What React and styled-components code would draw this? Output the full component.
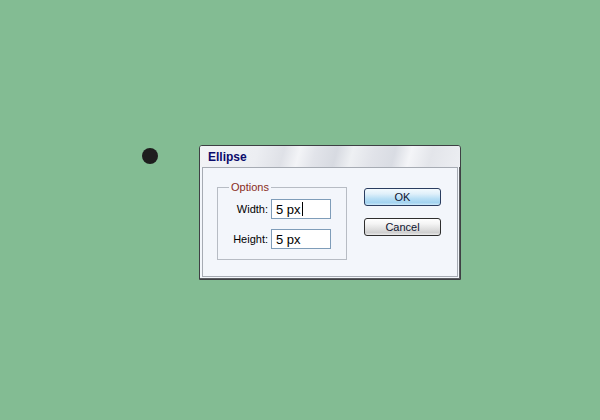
import React from 'react';
import styled, { createGlobalStyle } from 'styled-components';

const GlobalStyle = createGlobalStyle`
  html, body {
    margin: 0;
    padding: 0;
    background: #83bc93;
    width: 600px;
    height: 420px;
    overflow: hidden;
    font-family: "Liberation Sans", Arial, sans-serif;
  }
`;

const Stage = styled.div`
  display: flex;
  align-items: flex-start;
  padding: 145px 0 0 142px;
`;

const Dot = styled.div`
  width: 16px;
  height: 16px;
  border-radius: 50%;
  background: #1e1e1e;
  margin: 3px 41px 0 0;
`;

const Window = styled.div`
  width: 260px;
  border: 1px solid #3e4044;
  border-radius: 3px 3px 0 0;
  background: #f3f6fb;
  box-shadow: inset -1px -1px 0 #5c5e62;
  display: flex;
  flex-direction: column;
`;

const TitleBar = styled.div`
  height: 21px;
  display: flex;
  align-items: center;
  padding: 0 0 0 8px;
  border-radius: 2px 2px 0 0;
  background: linear-gradient(
    105deg,
    #f2f3f6 0%,
    #eceef2 22%,
    #dfe1e7 32%,
    #f3f4f7 38%,
    #e2e4ea 44%,
    #d7dae1 52%,
    #eef0f3 58%,
    #e1e3e9 66%,
    #d9dce3 74%,
    #f4f5f8 80%,
    #e3e5ea 88%,
    #eceef2 100%
  );
`;

const Title = styled.span`
  font-size: 12px;
  font-weight: bold;
  color: #0b0b6b;
  padding-top: 1px;
`;

const Body = styled.div`
  margin: 0 2px 2px 2px;
  border: 1px solid #a6abb3;
  background: #f3f6fb;
  display: flex;
  align-items: flex-start;
  padding: 13px 0 0 14px;
  box-sizing: border-box;
  height: 110px;
`;

const Group = styled.fieldset`
  margin: 0;
  width: 130px;
  box-sizing: border-box;
  border: 1px solid #b7bcc4;
  padding: 5px 15px 10px 4px;
`;

const Legend = styled.legend`
  font-size: 11px;
  line-height: 13px;
  color: #8a2c1c;
  padding: 0 2px;
  margin-left: 7px;
`;

const Fields = styled.div`
  display: grid;
  grid-template-columns: 46px 60px;
  column-gap: 3px;
  row-gap: 10px;
  align-items: center;
`;

const Label = styled.span`
  font-size: 11px;
  color: #000;
  text-align: right;
`;

const Field = styled.div`
  height: 20px;
  box-sizing: border-box;
  border: 1px solid #7f9db9;
  background: #fff;
  display: flex;
  align-items: center;
  padding-left: 4px;
  font-size: 13px;
  color: #000;
`;

const Caret = styled.span`
  width: 1px;
  height: 14px;
  background: #000;
  margin-left: 1px;
`;

const Buttons = styled.div`
  display: flex;
  flex-direction: column;
  gap: 12px;
  margin: 7px 0 0 17px;
`;

const Button = styled.div`
  width: 77px;
  height: 18px;
  box-sizing: border-box;
  border-radius: 3px;
  border: 1px solid ${(p) => (p.$primary ? '#2a3d60' : '#2e2e2e')};
  background: ${(p) =>
    p.$primary
      ? 'linear-gradient(#f3fafe 0%, #e0f0fa 30%, #b9dff5 60%, #a3d3f0 85%, #cbe8f8 100%)'
      : 'linear-gradient(#ffffff 0%, #f4f4f4 30%, #dedede 65%, #cfcfcf 85%, #ececec 100%)'};
  display: flex;
  align-items: center;
  justify-content: center;
  font-size: 11px;
  color: #0e1430;
`;

export default function App() {
  return (
    <>
      <GlobalStyle />
      <Stage>
        <Dot />
        <Window>
          <TitleBar>
            <Title>Ellipse</Title>
          </TitleBar>
          <Body>
            <Group>
              <Legend>Options</Legend>
              <Fields>
                <Label>Width:</Label>
                <Field>
                  5 px
                  <Caret />
                </Field>
                <Label>Height:</Label>
                <Field>5 px</Field>
              </Fields>
            </Group>
            <Buttons>
              <Button $primary>OK</Button>
              <Button>Cancel</Button>
            </Buttons>
          </Body>
        </Window>
      </Stage>
    </>
  );
}
